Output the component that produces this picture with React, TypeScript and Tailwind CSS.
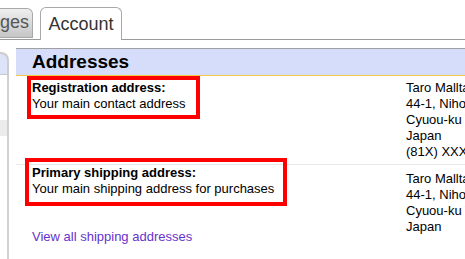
import React from "react";

export default function App() {
  return (
    <div className="w-[465px] h-[259px] overflow-hidden bg-white font-['Liberation_Sans',Arial,sans-serif] text-black">
      {/* Tab bar */}
      <div className="flex items-end h-[40px] border-b border-[#9a9a9a]">
        <div className="h-[30px] w-[33px] shrink-0 mb-px border border-l-0 border-[#a8a8a8] rounded-tr-[6px] bg-gradient-to-b from-[#efefef] to-[#c6c6c6] overflow-hidden">
          <div className="text-[18px] leading-[26px] text-[#555] whitespace-nowrap">ges</div>
        </div>
        <div className="ml-[7px] h-[33px] w-[82px] shrink-0 -mb-px border border-b-0 border-[#a8a8a8] rounded-t-[6px] bg-white flex items-center justify-center">
          <span className="text-[18px] leading-[26px] text-[#333]">Account</span>
        </div>
      </div>

      {/* Body */}
      <div className="flex h-[219px] pt-[8px]">
        {/* Left sidebar remnant */}
        <div className="w-[9px] shrink-0 mt-[4px] flex flex-col">
          <div className="h-[23px] bg-[#dde3f8] border-t-2 border-r-2 border-[#cdcdcd] rounded-tr-[8px] border-b border-b-[#c8c8c8]" />
          <div className="flex-1 border-r-2 border-[#d0d0d0]">
            <div className="mt-[45px] h-[16px] w-[7px] bg-[#ececec]" />
          </div>
        </div>

        {/* Main */}
        <div className="ml-[7px] flex-1 min-w-0">
          <div className="h-[28px] bg-[#d6ddfb] border-t border-[#a0a0a0] border-b border-b-[#f5c842] pl-[16px]">
            <h1 className="text-[19px] leading-[26px] font-bold">Addresses</h1>
          </div>

          {/* Row 1 */}
          <div className="flex pt-[4px] pb-[4px] border-b border-[#e8e8e8] text-[13px] leading-[16px]">
            <div className="w-[390px] shrink-0 pl-[16px]">
              <div className="relative inline-block">
                <div className="font-bold">Registration address:</div>
                <div>Your main contact address</div>
                <div className="absolute -left-[5px] -top-[4px] w-[173px] h-[43px] border-4 border-[#ff0000] pointer-events-none" />
              </div>
            </div>
            <div className="shrink-0 whitespace-nowrap">
              <div>Taro Malltaja</div>
              <div>44-1, Nihonbashi</div>
              <div>Cyuou-ku Tokyo</div>
              <div>Japan</div>
              <div>(81X) XXXX-XXXX</div>
            </div>
          </div>

          {/* Row 2 */}
          <div className="flex text-[13px] leading-[16px]">
            <div className="w-[390px] shrink-0 pl-[16px]">
              <div className="relative inline-block">
                <div className="font-bold">Primary shipping address:</div>
                <div>Your main shipping address for purchases</div>
                <div className="absolute -left-[7px] -top-[7px] w-[262px] h-[48px] border-4 border-[#ff0000] pointer-events-none" />
              </div>
              <div className="mt-[32px]">
                <a href="#" className="text-[#6633cc]">View all shipping addresses</a>
              </div>
            </div>
            <div className="shrink-0 whitespace-nowrap pt-[6px]">
              <div>Taro Malltaja</div>
              <div>44-1, Nihonbashi</div>
              <div>Cyuou-ku Tokyo</div>
              <div>Japan</div>
            </div>
          </div>
        </div>
      </div>
    </div>
  );
}
